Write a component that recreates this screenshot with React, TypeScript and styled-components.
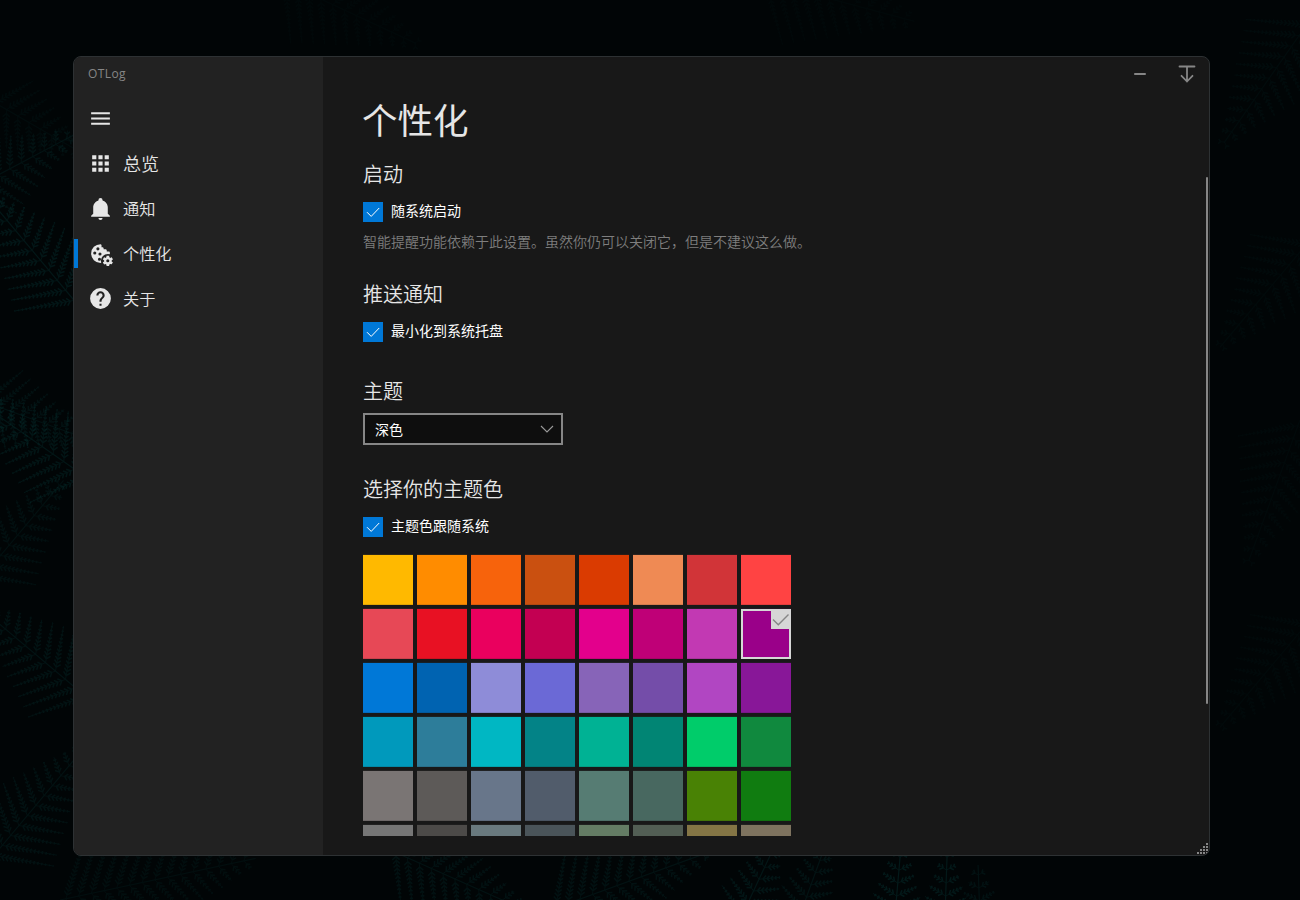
import React from 'react';
import styled, { createGlobalStyle } from 'styled-components';

const GlobalStyle = createGlobalStyle`
  * { box-sizing: border-box; }
  body {
    margin: 0;
    overflow: hidden;
    background: #010506;
    font-family: "Open Sans", "Noto Sans CJK SC", sans-serif;
    color: #e6e6e6;
  }
`;

const Desktop = styled.div`
  position: relative;
  width: 1300px;
  height: 900px;
  padding: 56px 90px 44px 73px;
  overflow: hidden;
  background: #010506;
`;

const Wallpaper = styled.svg`
  position: absolute;
  inset: 0;
`;

const Window = styled.div`
  position: relative;
  display: flex;
  width: 1137px;
  height: 800px;
  border: 1px solid #2d3133;
  border-radius: 8px;
  overflow: hidden;
  background: #181818;
`;

const Sidebar = styled.aside`
  width: 249px;
  flex: none;
  background: #222222;
`;

const AppTitle = styled.div`
  height: 39px;
  padding: 8px 0 0 14px;
  font-size: 12px;
  line-height: 18px;
  letter-spacing: 0.4px;
  color: #868686;
`;

const NavItem = styled.div<{ $active?: boolean; $size?: number }>`
  position: relative;
  display: flex;
  align-items: center;
  gap: 10px;
  height: 45px;
  padding-left: 14px;
  font-size: ${(p) => p.$size ?? 16.2}px;
  font-weight: 350;
  line-height: 24px;

  &::before {
    content: '';
    position: absolute;
    left: 0;
    top: 8px;
    width: 4px;
    height: 29px;
    background: ${(p) => (p.$active ? '#0078d7' : 'transparent')};
  }
`;

const NavIcon = styled.svg`
  flex: none;
  width: 25px;
  height: 25px;
  fill: #e6e6e6;
`;

const Content = styled.main`
  display: flex;
  flex: 1;
  flex-direction: column;
`;

const Caption = styled.div`
  display: flex;
  justify-content: flex-end;
  align-items: center;
  gap: 27px;
  height: 34px;
  padding-right: 12px;
`;

const CaptionIcon = styled.svg`
  width: 20px;
  height: 20px;
  fill: none;
  stroke: #868686;
  stroke-width: 1.8;
  stroke-linecap: round;
  stroke-linejoin: round;
`;

const Page = styled.div`
  height: 745px;
  padding-left: 40px;
  overflow: hidden;
`;

const Title = styled.h1`
  margin: 0 0 0 -1px;
  height: 58px;
  font-size: 35.5px;
  font-weight: 400;
  line-height: 58px;
`;

const Section = styled.section<{ $height: number }>`
  height: ${(p) => p.$height}px;
`;

const Heading = styled.h2`
  margin: 0;
  padding-top: 11px;
  height: 53px;
  font-size: 20px;
  font-weight: 350;
  line-height: 30px;
`;

const CheckRow = styled.label`
  display: flex;
  align-items: center;
  gap: 8px;
  height: 20px;
  font-size: 14px;
  line-height: 20px;
  color: #ffffff;
`;

const Box = styled.svg`
  width: 20px;
  height: 20px;
  background: #0078d7;
  fill: none;
  stroke: #ffffff;
  stroke-width: 1;
`;

const CheckText = styled.span`
  margin-top: -2px;
`;

const Hint = styled.p`
  margin: 10px 0 0;
  font-size: 14px;
  font-weight: 350;
  line-height: 20px;
  color: #7e7e7e;
`;

const Select = styled.div`
  display: flex;
  align-items: center;
  justify-content: space-between;
  width: 200px;
  height: 32px;
  margin-top: -6px;
  padding: 1px 7px 0 10px;
  border: 2px solid #868686;
  background: #0e0e0e;
  font-size: 14px;
  line-height: 20px;
  color: #ffffff;
`;

const Chevron = styled.svg`
  width: 14px;
  height: 8px;
  margin-top: -1px;
  fill: none;
  stroke: #9a9a9a;
  stroke-width: 1.1;
`;

const Palette = styled.div`
  display: grid;
  grid-template-columns: repeat(8, 50px);
  grid-auto-rows: 50px;
  gap: 4px;
  margin-top: 18px;
`;

const Swatch = styled.div<{ $color: string; $selected?: boolean }>`
  display: flex;
  justify-content: flex-end;
  background: ${(p) => p.$color};
  border: ${(p) => (p.$selected ? '2px solid #d6d6d6' : 'none')};
  box-shadow:
    0 -1px 0 color-mix(in srgb, ${(p) => p.$color} 10%, #181818),
    inset 0 -1px 0 rgba(24, 24, 24, ${(p) => (p.$selected ? 0 : 0.13)});
`;

const Tick = styled.svg`
  width: 18px;
  height: 18px;
  background: #d6d6d6;
  fill: none;
  stroke: #868686;
  stroke-width: 1.4;
`;

const Scrollbar = styled.div`
  position: absolute;
  right: 1px;
  top: 120px;
  width: 2px;
  height: 527px;
  background: #868686;
  border-radius: 1px;
`;

const Grip = styled.svg`
  position: absolute;
  right: 1px;
  bottom: 1px;
  width: 11px;
  height: 11px;
  fill: #868686;
`;

const colors = [
  '#ffb900', '#ff8c00', '#f7630c', '#ca5010', '#da3b01', '#ef8a54', '#d13438', '#ff4343',
  '#e74856', '#e81123', '#ea005e', '#c30052', '#e3008c', '#bf0077', '#c239b3', '#9a0089',
  '#0078d7', '#0063b1', '#8e8cd8', '#6b69d6', '#8764b8', '#744da9', '#b146c2', '#881798',
  '#0099bc', '#2d7d9a', '#00b7c3', '#038387', '#00b294', '#018574', '#00cc6a', '#10893e',
  '#7a7574', '#5d5a58', '#68768a', '#515c6b', '#567c73', '#486860', '#498205', '#107c10',
  '#767676', '#4c4a48', '#69797e', '#4a5459', '#647c64', '#525e54', '#847545', '#7e735f',
];

interface FrondProps {
  x: number;
  y: number;
  angle: number;
  length: number;
  opacity: number;
}

// A stem with tapering side fronds, each edged with short leaflets.
const Frond = ({ x, y, angle, length, opacity }: FrondProps) => {
  const ribs: string[] = [];
  const leaflets: string[] = [];
  for (let i = 6; i < length; i += 13) {
    const reach = (1 - i / (length + 10)) * length * 0.42;
    [-1, 1].forEach((side) => {
      ribs.push(`M${i} 0l${reach * 0.5} ${side * reach * 0.87}`);
      for (let t = 4; t < reach; t += 4) {
        const size = 5 * (1 - t / (reach + 6));
        const px = i + t * 0.5;
        const py = side * t * 0.87;
        leaflets.push(`M${px} ${py}l${size} ${side * size * 0.3}M${px} ${py}l${-size * 0.4} ${side * size}`);
      }
    });
  }
  return (
    <g transform={`translate(${x} ${y}) rotate(${angle})`} opacity={opacity} fill="none" stroke="#084443">
      <path d={`M0 0H${length}`} strokeWidth="1.2" />
      <path d={ribs.join('')} strokeWidth="0.8" />
      <path d={leaflets.join('')} strokeWidth="1.5" />
    </g>
  );
};

const fronds: FrondProps[] = [
  { x: 78, y: 305, angle: -130, length: 150, opacity: 0.28 },
  { x: -30, y: 190, angle: -28, length: 120, opacity: 0.2 },
  { x: -10, y: 100, angle: 30, length: 110, opacity: 0.1 },
  { x: 90, y: 480, angle: -145, length: 150, opacity: 0.26 },
  { x: -20, y: 400, angle: 20, length: 120, opacity: 0.2 },
  { x: -20, y: 580, angle: -50, length: 130, opacity: 0.17 },
  { x: 90, y: 700, angle: -140, length: 150, opacity: 0.22 },
  { x: -10, y: 860, angle: -50, length: 150, opacity: 0.2 },
  { x: 60, y: 900, angle: -12, length: 200, opacity: 0.14 },
  { x: 390, y: 850, angle: 24, length: 150, opacity: 0.2 },
  { x: 550, y: 910, angle: -20, length: 170, opacity: 0.2 },
  { x: 740, y: 920, angle: -65, length: 90, opacity: 0.26 },
  { x: 800, y: 915, angle: -70, length: 80, opacity: 0.22 },
  { x: 895, y: 915, angle: -85, length: 70, opacity: 0.32 },
  { x: 945, y: 915, angle: -88, length: 62, opacity: 0.3 },
  { x: 980, y: 920, angle: -92, length: 55, opacity: 0.2 },
  { x: 280, y: -20, angle: 25, length: 150, opacity: 0.06 },
  { x: 760, y: -20, angle: 15, length: 160, opacity: 0.06 },
  { x: 1310, y: 20, angle: 125, length: 150, opacity: 0.1 },
  { x: 1310, y: 240, angle: 130, length: 140, opacity: 0.08 },
  { x: 1300, y: 420, angle: 110, length: 150, opacity: 0.07 },
  { x: 1310, y: 620, angle: 130, length: 140, opacity: 0.07 },
];

const App = () => (
  <>
    <GlobalStyle />
    <Desktop>
      <Wallpaper width="1300" height="900" viewBox="0 0 1300 900">
        {fronds.map((f) => (
          <Frond key={`${f.x}-${f.y}`} {...f} />
        ))}
      </Wallpaper>
      <Window>
        <Sidebar>
          <AppTitle>OTLog</AppTitle>
          <NavItem>
            <NavIcon viewBox="0 0 24 24">
              <path d="M3 6h18v2H3V6m0 5h18v2H3v-2m0 5h18v2H3v-2Z" />
            </NavIcon>
          </NavItem>
          <NavItem $size={18}>
            <NavIcon viewBox="0 0 24 24">
              <path d="M16 20h4v-4h-4m0-2h4v-4h-4m-6-2h4V4h-4m6 4h4V4h-4m-6 10h4v-4h-4m-6 4h4v-4H4m0 10h4v-4H4m6 4h4v-4h-4M4 8h4V4H4v4Z" />
            </NavIcon>
            总览
          </NavItem>
          <NavItem>
            <NavIcon viewBox="0 0 24 24">
              <path d="M21 19v1H3v-1l2-2v-6c0-3.1 2.03-5.83 5-6.71V4a2 2 0 0 1 4 0v.29c2.97.88 5 3.61 5 6.71v6l2 2m-7 2a2 2 0 0 1-4 0" />
            </NavIcon>
            通知
          </NavItem>
          <NavItem $active>
            <NavIcon viewBox="0 0 24 24">
              <mask id="cookie-cut">
                <rect width="24" height="24" fill="#fff" />
                <circle cx="19" cy="19" r="6.6" fill="#000" />
              </mask>
              <path
                mask="url(#cookie-cut)"
                fillRule="evenodd"
                d="M12 3a9 9 0 1 0 9 9c0-.5-.04-1-.13-1.5C20.6 10 20 10 20 10h-2V9c0-1-1-1-1-1h-2V7c0-1-1-1-1-1h-1V4c0-1-1-1-1-1M9.5 6a1.5 1.5 0 1 1 0 3 1.5 1.5 0 0 1 0-3m-3 4a1.5 1.5 0 1 1 0 3 1.5 1.5 0 0 1 0-3m5 1a1.5 1.5 0 1 1 0 3 1.5 1.5 0 0 1 0-3M11 16a1.5 1.5 0 1 1 0 3 1.5 1.5 0 0 1 0-3"
              />
              <path
                fillRule="evenodd"
                d="M23.8 20.4c.1 0 .1.1 0 .2l-1 1.7c-.1.1-.2.1-.3.1l-1.2-.4c-.3.2-.5.3-.8.5l-.2 1.3c0 .1-.1.2-.2.2h-2c-.1 0-.2-.1-.3-.2l-.2-1.3c-.3-.1-.6-.3-.8-.5l-1.2.5c-.1 0-.2 0-.3-.1l-1-1.7c-.1-.1 0-.2.1-.3l1.1-.8v-1l-1.1-.8c-.1-.1-.1-.2-.1-.3l1-1.7c.1-.1.2-.1.3-.1l1.2.5c.3-.2.5-.3.8-.5l.2-1.3c0-.1.1-.2.3-.2h2c.1 0 .2.1.2.2l.2 1.3c.3.1.6.3.9.5l1.2-.5c.1 0 .3 0 .3.1l1 1.7c.1.1 0 .2-.1.3l-1.1.8v1l1.1.8M20.5 19a1.5 1.5 0 1 0-3 0 1.5 1.5 0 0 0 3 0"
              />
            </NavIcon>
            个性化
          </NavItem>
          <NavItem>
            <NavIcon viewBox="0 0 24 24">
              <path d="m15.07 11.25-.9.92C13.45 12.89 13 13.5 13 15h-2v-.5c0-1.11.45-2.11 1.17-2.83l1.24-1.26c.37-.36.59-.86.59-1.41a2 2 0 0 0-4 0H8a4 4 0 0 1 8 0c0 .88-.36 1.67-.93 2.25M13 19h-2v-2h2M12 2a10 10 0 1 0 0 20 10 10 0 0 0 0-20Z" />
            </NavIcon>
            关于
          </NavItem>
        </Sidebar>
        <Content>
          <Caption>
            <CaptionIcon viewBox="0 0 20 20">
              <path d="M4.9 10H15.1" />
            </CaptionIcon>
            <CaptionIcon viewBox="0 0 20 20">
              <path d="M2.5 2.5H17.5M10 2.5V17.5M4.5 11.8L10 17.5L15.5 11.8" />
            </CaptionIcon>
          </Caption>
          <Page>
            <Title>个性化</Title>
            <Section $height={120}>
              <Heading>启动</Heading>
              <CheckRow>
                <Box viewBox="0 0 20 20"><path d="M4 10.2L8.2 14.4L16.2 6" /></Box>
                <CheckText>随系统启动</CheckText>
              </CheckRow>
              <Hint>智能提醒功能依赖于此设置。虽然你仍可以关闭它，但是不建议这么做。</Hint>
            </Section>
            <Section $height={97}>
              <Heading>推送通知</Heading>
              <CheckRow>
                <Box viewBox="0 0 20 20"><path d="M4 10.2L8.2 14.4L16.2 6" /></Box>
                <CheckText>最小化到系统托盘</CheckText>
              </CheckRow>
            </Section>
            <Section $height={98}>
              <Heading>主题</Heading>
              <Select>
                深色
                <Chevron viewBox="0 0 14 8"><path d="M1 1L7 7L13 1" /></Chevron>
              </Select>
            </Section>
            <Heading>选择你的主题色</Heading>
            <CheckRow>
              <Box viewBox="0 0 20 20"><path d="M4 10.2L8.2 14.4L16.2 6" /></Box>
              <CheckText>主题色跟随系统</CheckText>
            </CheckRow>
            <Palette>
              {colors.map((color, i) => (
                <Swatch key={color} $color={color} $selected={i === 15}>
                  {i === 15 && (
                    <Tick viewBox="0 0 18 18"><path d="M2 8.5L7.3 13.7L17.5 3.5" /></Tick>
                  )}
                </Swatch>
              ))}
            </Palette>
          </Page>
        </Content>
        <Scrollbar />
        <Grip viewBox="0 0 11 11">
          {[0, 1, 2, 3].map((row) =>
            [0, 1, 2, 3]
              .filter((col) => col >= 3 - row)
              .map((col) => <rect key={`${row}-${col}`} x={col * 3} y={row * 3} width="2" height="2" />),
          )}
        </Grip>
      </Window>
    </Desktop>
  </>
);

export default App;
